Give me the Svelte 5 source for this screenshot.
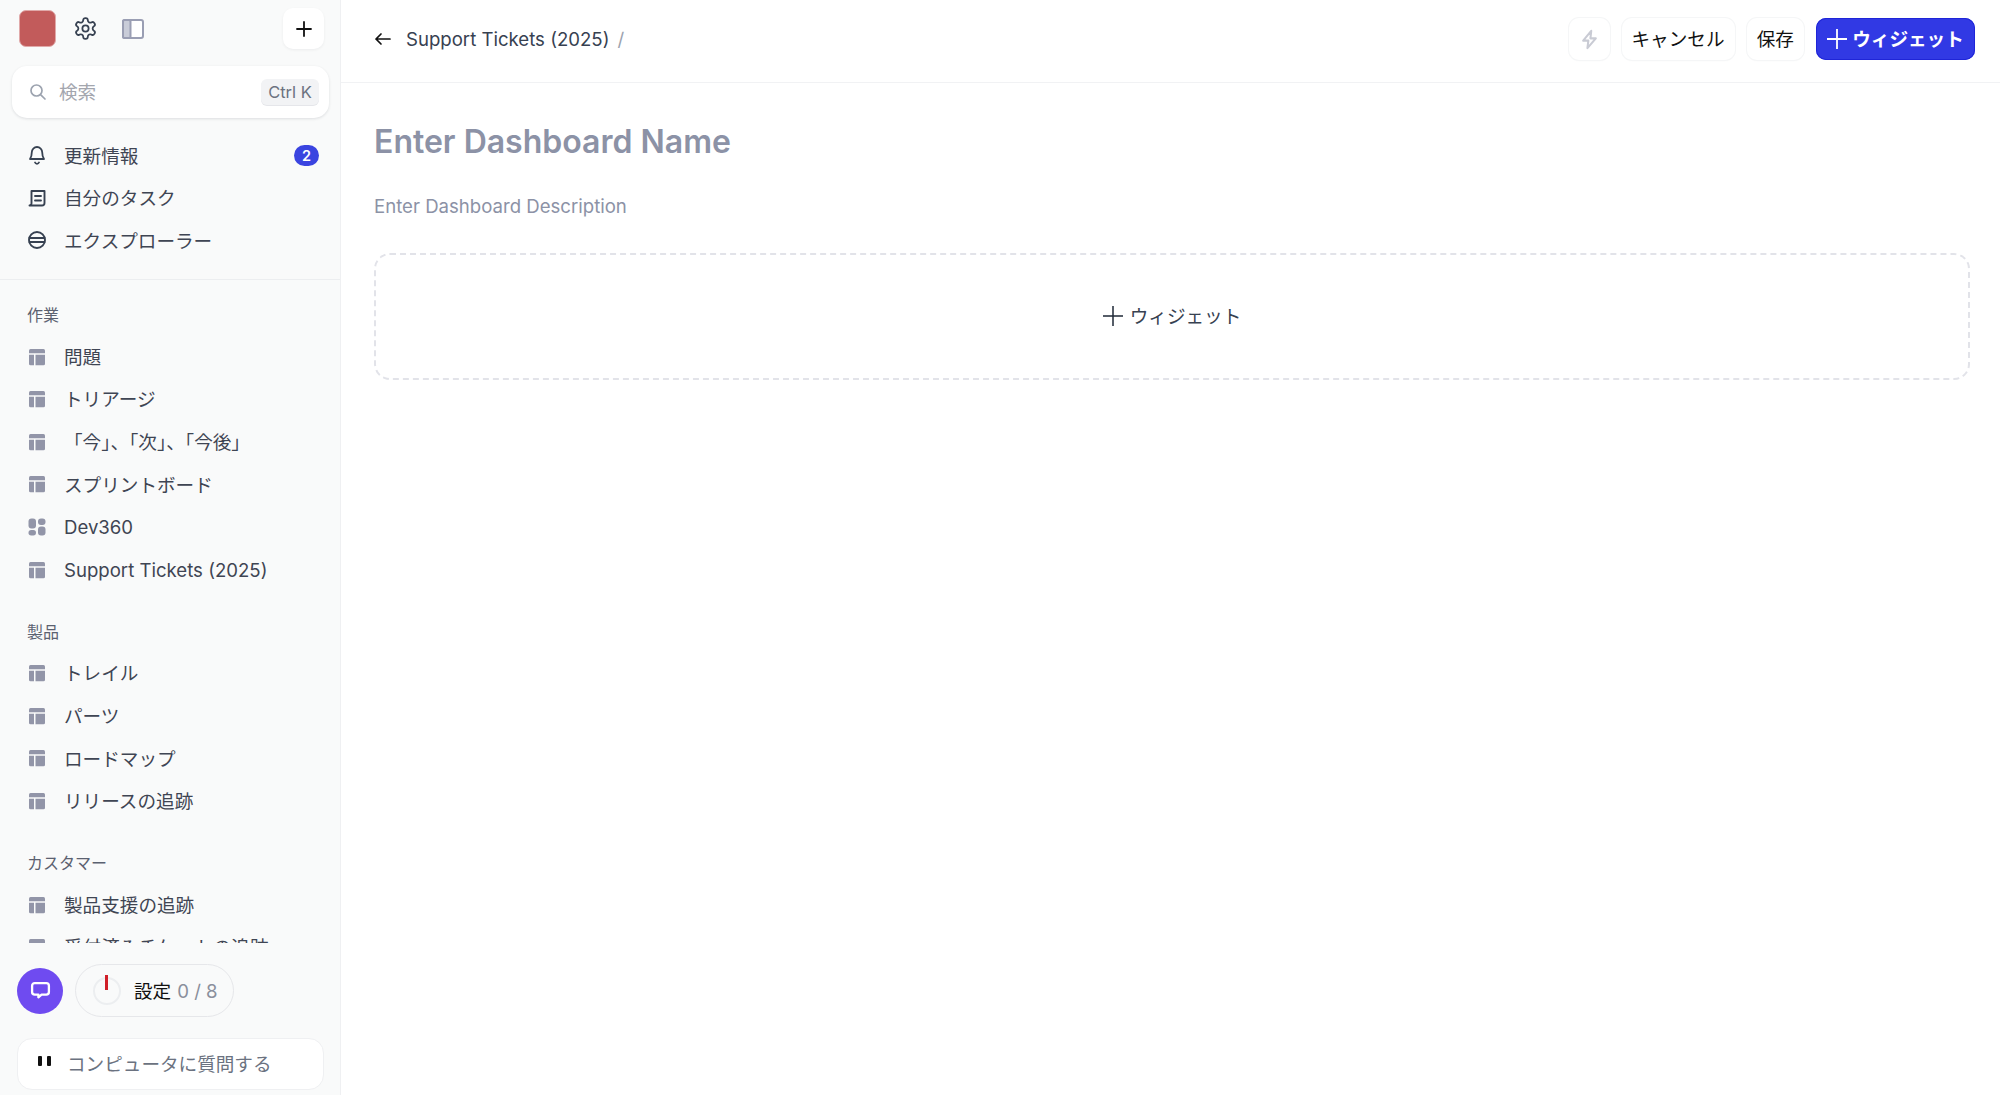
<script lang="ts">
  interface NavItem {
    label: string;
    icon?: 'table' | 'grid';
  }
  interface NavSection {
    title: string;
    items: NavItem[];
  }

  const sections: NavSection[] = [
    {
      title: '作業',
      items: [
        { label: '問題' },
        { label: 'トリアージ' },
        { label: '「今」、「次」、「今後」' },
        { label: 'スプリントボード' },
        { label: 'Dev360', icon: 'grid' },
        { label: 'Support Tickets (2025)' }
      ]
    },
    {
      title: '製品',
      items: [
        { label: 'トレイル' },
        { label: 'パーツ' },
        { label: 'ロードマップ' },
        { label: 'リリースの追跡' }
      ]
    },
    {
      title: 'カスタマー',
      items: [{ label: '製品支援の追跡' }, { label: '受付済みチケットの追跡' }]
    }
  ];

  // The CJK fallback sits a little lower than Inter on the same line.
  const isJa = (label: string) => !/^[A-Za-z]/.test(label);
</script>

<div class="app">
  <aside class="sidebar">
    <div class="top-row">
      <div class="logo"></div>
      <button class="icon-btn gear" aria-label="設定">
        <svg viewBox="0 0 24 24" width="25" height="25" fill="none" stroke="#374151" stroke-width="1.7" stroke-linecap="round" stroke-linejoin="round">
          <path d="M12.22 2h-.44a2 2 0 0 0-2 2v.18a2 2 0 0 1-1 1.73l-.43.25a2 2 0 0 1-2 0l-.15-.08a2 2 0 0 0-2.73.73l-.22.38a2 2 0 0 0 .73 2.73l.15.1a2 2 0 0 1 1 1.72v.51a2 2 0 0 1-1 1.74l-.15.09a2 2 0 0 0-.73 2.73l.22.38a2 2 0 0 0 2.73.73l.15-.08a2 2 0 0 1 2 0l.43.25a2 2 0 0 1 1 1.73V20a2 2 0 0 0 2 2h.44a2 2 0 0 0 2-2v-.18a2 2 0 0 1 1-1.73l.43-.25a2 2 0 0 1 2 0l.15.08a2 2 0 0 0 2.73-.73l.22-.39a2 2 0 0 0-.73-2.73l-.15-.08a2 2 0 0 1-1-1.74v-.5a2 2 0 0 1 1-1.74l.15-.09a2 2 0 0 0 .73-2.73l-.22-.38a2 2 0 0 0-2.73-.73l-.15.08a2 2 0 0 1-2 0l-.43-.25a2 2 0 0 1-1-1.73V4a2 2 0 0 0-2-2z" />
          <circle cx="12" cy="12" r="3" />
        </svg>
      </button>
      <button class="icon-btn panel" aria-label="サイドバー">
        <svg viewBox="0 0 22 20" width="22" height="20">
          <rect x="1" y="1" width="20" height="18" rx="2" fill="#fff" stroke="#9a9eb3" stroke-width="2" />
          <rect x="1" y="1" width="7.5" height="18" rx="1.5" fill="#c9ccd8" stroke="#9a9eb3" stroke-width="2" />
        </svg>
      </button>
      <button class="plus-btn" aria-label="追加">
        <svg viewBox="0 0 20 20" width="20" height="20" stroke="#111" stroke-width="1.8" stroke-linecap="round"><path d="M10 3v14M3 10h14" /></svg>
      </button>
    </div>

    <div class="search">
      <svg viewBox="0 0 20 20" width="20" height="20" fill="none" stroke="#9ca3af" stroke-width="1.7" stroke-linecap="round"><circle cx="8.5" cy="8.5" r="5.5" /><path d="M12.8 12.8 17 17" /></svg>
      <span class="search-text ja">検索</span>
      <kbd>Ctrl K</kbd>
    </div>

    <nav class="primary">
      <div class="item">
        <svg class="ico" viewBox="0 0 20 20" fill="none" stroke="#374151" stroke-width="1.8" stroke-linecap="round" stroke-linejoin="round"><path d="M10 2a5.200 5.200 0 0 0-5.200 5.200c0 4-1 5.600-1.800 6.800h14c-.8-1.200-1.800-2.800-1.800-6.800A5.200 5.200 0 0 0 10 2z" /><path d="M8 17.500a2.200 2.200 0 0 0 4 0" /></svg>
        <span class="ja">更新情報</span>
        <b class="badge">2</b>
      </div>
      <div class="item">
        <svg class="ico" viewBox="0 0 20 20" fill="none" stroke="#374151" stroke-width="1.9" stroke-linecap="round" stroke-linejoin="round"><path d="M4.500 3h13v12a2.500 2.500 0 0 1-2.500 2.500H2.500a2.200 2.200 0 0 0 2-2.500z" /><path d="M8 8h6M8 12.500h6" /></svg>
        <span class="ja">自分のタスク</span>
      </div>
      <div class="item">
        <svg class="ico" viewBox="0 0 20 20" fill="none" stroke="#374151" stroke-width="1.9" stroke-linecap="round"><circle cx="10" cy="10" r="8" /><path d="M2.500 8h15M2.500 12h15" /></svg>
        <span class="ja">エクスプローラー</span>
      </div>
    </nav>

    <div class="scroll">
      {#each sections as section (section.title)}
        <section class="group">
          <h4>{section.title}</h4>
          {#each section.items as item (item.label)}
            <div class="item">
              {#if item.icon === 'grid'}
                <svg class="ico" viewBox="0 0 20 20" fill="#9295a8"><rect x="1.500" y="1.500" width="7.500" height="10" rx="3" /><rect x="11" y="1.500" width="7.500" height="6.500" rx="3" /><rect x="1.500" y="13" width="7.500" height="5.500" rx="2.700" /><rect x="11" y="9.500" width="7.500" height="9" rx="3" /></svg>
              {:else}
                <svg class="ico" viewBox="0 0 20 20" fill="#9295a8"><path d="M3.500 2h13a1.500 1.500 0 0 1 1.500 1.500V6.200H2V3.500A1.500 1.500 0 0 1 3.500 2z" /><path d="M2 7.700h5v10.500H3.500A1.500 1.500 0 0 1 2 16.700z" /><path d="M8.500 7.700H18v9a1.500 1.500 0 0 1-1.500 1.500h-8z" /></svg>
              {/if}
              <span class:ja={isJa(item.label)}>{item.label}</span>
            </div>
          {/each}
        </section>
      {/each}
    </div>

    <div class="footer-row">
      <div class="chat">
        <svg viewBox="0 0 20 20" width="21" height="21" fill="none" stroke="#fff" stroke-width="2.200" stroke-linejoin="round"><path d="M4.500 3h11A2.500 2.500 0 0 1 18 5.500v6a2.500 2.500 0 0 1-2.500 2.500H11l-3 2.500V14H4.500A2.500 2.500 0 0 1 2 11.500v-6A2.500 2.500 0 0 1 4.500 3z" /></svg>
      </div>
      <div class="setup">
        <span class="ring"><i></i></span>
        <span class="setup-label ja">設定</span>
        <span class="setup-count">0 / 8</span>
      </div>
    </div>

    <div class="ask">
      <span class="pause"><i></i><i></i></span>
      <span class="ja">コンピュータに質問する</span>
    </div>
  </aside>

  <main class="main">
    <header class="topbar">
      <svg viewBox="0 0 18 14" width="18" height="14" fill="none" stroke="#111" stroke-width="1.700" stroke-linecap="round" stroke-linejoin="round"><path d="M16 7H2M7 2 2 7l5 5" /></svg>
      <span class="crumb">Support Tickets (2025)</span>
      <span class="slash">/</span>
      <div class="actions">
        <button class="btn bolt" aria-label="実行">
          <svg viewBox="0 0 20 20" width="23" height="23" fill="none" stroke="#c9cbd4" stroke-width="1.800" stroke-linejoin="round"><path d="M11.500 2.500 4.500 11h4.500l-.8 6.500 7.300-8.500h-4.700z" /></svg>
        </button>
        <button class="btn cancel"><span class="ja">キャンセル</span></button>
        <button class="btn save"><span class="ja">保存</span></button>
        <button class="btn primary-btn">
          <svg viewBox="0 0 20 20" width="20" height="20" stroke="#fff" stroke-width="1.800"><path d="M10 0v20M0 10h20" /></svg>
          <span class="ja">ウィジェット</span>
        </button>
      </div>
    </header>

    <div class="content">
      <h1>Enter Dashboard Name</h1>
      <p>Enter Dashboard Description</p>
      <div class="dropzone">
        <svg viewBox="0 0 20 20" width="20" height="20" stroke="#1f2937" stroke-width="1.500"><path d="M10 0v20M0 10h20" /></svg>
        <span class="ja">ウィジェット</span>
      </div>
    </div>
  </main>
</div>

<style>
  :global(body) {
    margin: 0;
    background: #fff;
    font-family: Inter, "Noto Sans CJK JP", sans-serif;
  }
  .app {
    display: flex;
    height: 1095px;
    overflow: hidden;
  }
  .sidebar {
    width: 341px;
    flex: none;
    box-sizing: border-box;
    background: #f9fafa;
    border-right: 1px solid #eff0f2;
    display: flex;
    flex-direction: column;
  }
  button {
    font: inherit;
    border: none;
    background: none;
    padding: 0;
    display: flex;
    align-items: center;
    justify-content: center;
  }
  .ja {
    padding-bottom: 2.500px;
  }
  .top-row {
    display: flex;
    align-items: center;
    height: 41px;
    margin: 8px 0 0;
    padding: 0 16px 0 19px;
  }
  .logo {
    width: 37px;
    height: 37px;
    border-radius: 7px;
    background: #c25b5b;
    border: 1px solid #e0a9a9;
    box-sizing: border-box;
  }
  .gear {
    margin-left: 17px;
  }
  .panel {
    margin-left: 24px;
  }
  .plus-btn {
    margin-left: auto;
    width: 41px;
    height: 41px;
    border-radius: 10px;
    background: #fff;
    box-shadow: 0 1px 3px rgba(20, 25, 40, 0.06);
  }
  .search {
    margin: 17px 11px 0 12px;
    height: 52px;
    padding: 0 10px 0 16px;
    box-sizing: border-box;
    background: #fff;
    border-radius: 15px;
    box-shadow: 0 1px 3px rgba(20, 25, 40, 0.12);
    display: flex;
    align-items: center;
    gap: 11px;
  }
  .search-text {
    color: #a3a6ae;
    font-size: 18.6px;
    flex: 1;
  }
  kbd {
    font-family: inherit;
    font-size: 16.5px;
    color: #6b7280;
    background: #f2f3f5;
    border-radius: 6px;
    height: 26px;
    width: 58px;
    justify-content: center;
    display: flex;
    align-items: center;
    box-shadow: 0 1px 0 #e5e6ea;
  }
  .primary {
    margin-top: 16px;
    padding-bottom: 17px;
    border-bottom: 1px solid #eceef0;
  }
  .item {
    height: 42.600px;
    display: flex;
    align-items: center;
    padding: 0 21px 0 27px;
    gap: 17px;
    font-size: 18.6px;
    color: #3f4553;
    white-space: nowrap;
  }
  .ico {
    width: 20px;
    height: 20px;
    flex: none;
  }
  .badge {
    margin-left: auto;
    width: 25px;
    height: 21px;
    border-radius: 11px;
    background: #3a44e0;
    color: #fff;
    font-size: 14.5px;
    font-weight: 600;
    display: flex;
    align-items: center;
    justify-content: center;
  }
  .scroll {
    flex: 1;
    min-height: 0;
    overflow: hidden;
    padding-top: 13.500px;
    margin-bottom: 21px;
  }
  .group {
    margin-bottom: 19px;
  }
  h4 {
    margin: 0;
    height: 42px;
    display: flex;
    align-items: center;
    padding-left: 27px;
    font-size: 16px;
    font-weight: 400;
    color: #5b6170;
  }
  .footer-row {
    display: flex;
    align-items: center;
    gap: 12px;
    padding-left: 17px;
  }
  .chat {
    width: 46px;
    height: 46px;
    border-radius: 50%;
    background: #6f4bf0;
    display: flex;
    align-items: center;
    justify-content: center;
  }
  .setup {
    width: 159px;
    height: 53px;
    box-sizing: border-box;
    border: 1px solid #e6e7ea;
    border-radius: 27px;
    display: flex;
    align-items: center;
    padding-left: 17px;
  }
  .ring {
    width: 28px;
    height: 28px;
    box-sizing: border-box;
    border: 2px solid #eceef0;
    border-radius: 50%;
    position: relative;
    margin-right: 13px;
  }
  .ring i {
    position: absolute;
    left: 10px;
    top: -4px;
    width: 2.500px;
    height: 15px;
    background: #d01f28;
  }
  .setup-label {
    font-size: 18.6px;
    color: #111;
    margin-right: 6px;
  }
  .setup-count {
    font-size: 18.6px;
    color: #8a8f9c;
  }
  .ask {
    margin: 21px 16px 5px 17px;
    height: 52px;
    box-sizing: border-box;
    background: #fff;
    border: 1px solid #eff0f2;
    border-radius: 15px;
    display: flex;
    align-items: center;
    padding-left: 20px;
    gap: 16px;
    font-size: 18.6px;
    color: #6b7280;
  }
  .pause {
    display: flex;
    gap: 5px;
    margin-top: -6px;
  }
  .pause i {
    width: 4px;
    height: 10px;
    background: #111;
    border-radius: 1px;
  }
  .main {
    flex: 1;
    min-width: 0;
  }
  .topbar {
    height: 83px;
    box-sizing: border-box;
    border-bottom: 1px solid #f1f2f4;
    display: flex;
    align-items: center;
    padding: 0 25px 4px 33px;
    font-size: 18.6px;
  }
  .crumb {
    margin-left: 14px;
    color: #374151;
  }
  .slash {
    margin-left: 8px;
    color: #9ca3af;
  }
  .actions {
    margin-left: auto;
    display: flex;
    gap: 12px;
  }
  .btn {
    height: 42px;
    border-radius: 10px;
    font-size: 18.6px;
    color: #111;
    box-shadow: 0 0 0 1px #f5f6f7, 0 1px 2px rgba(20, 25, 40, 0.03);
    background: #fff;
  }
  .bolt {
    width: 41px;
  }
  .cancel {
    width: 113px;
  }
  .save {
    width: 57.500px;
  }
  .primary-btn {
    width: 159px;
    background: #3139e4;
    box-shadow: inset 0 0 0 1px #1f25d8;
    color: #fff;
    font-weight: 600;
    gap: 5px;
  }
  .content {
    padding: 0 30px 0 33px;
  }
  h1 {
    margin: 38.500px 0 0;
    font-size: 32px;
    line-height: 40px;
    font-weight: 600;
    color: #8c92a6;
  }
  p {
    margin: 31px 0 0;
    font-size: 18.6px;
    line-height: 26px;
    color: #8c92a6;
  }
  .dropzone {
    margin-top: 34px;
    height: 127px;
    box-sizing: border-box;
    border: 2px dashed #e2e3e9;
    border-radius: 16px;
    display: flex;
    align-items: center;
    justify-content: center;
    gap: 7px;
    font-size: 18.6px;
    color: #374151;
  }
</style>
